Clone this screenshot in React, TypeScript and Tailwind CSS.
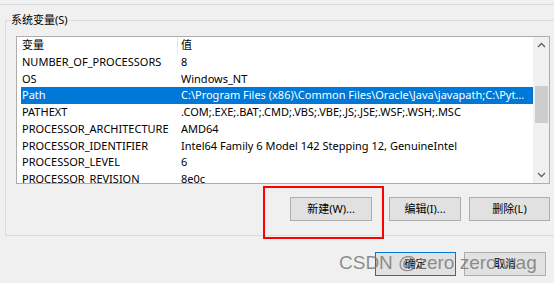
import React from "react";

const rows: [string, string][] = [
  ["NUMBER_OF_PROCESSORS", "8"],
  ["OS", "Windows_NT"],
  ["Path", "C:\\Program Files (x86)\\Common Files\\Oracle\\Java\\javapath;C:\\Python39\\Scripts\\;C:\\Python39\\"],
  ["PATHEXT", ".COM;.EXE;.BAT;.CMD;.VBS;.VBE;.JS;.JSE;.WSF;.WSH;.MSC"],
  ["PROCESSOR_ARCHITECTURE", "AMD64"],
  ["PROCESSOR_IDENTIFIER", "Intel64 Family 6 Model 142 Stepping 12, GenuineIntel"],
  ["PROCESSOR_LEVEL", "6"],
  ["PROCESSOR_REVISION", "8e0c"],
];

function Btn({ label, w, blue }: { label: string; w: string; blue?: boolean }) {
  return (
    <div
      className={`${w} h-[24px] flex items-center justify-center bg-[#e1e1e1] border ${
        blue ? "border-[#0078d7]" : "border-[#adadad]"
      } text-[11px] text-black`}
    >
      {label}
    </div>
  );
}

export default function App() {
  return (
    <div
      className="relative w-[554px] h-[283px] overflow-hidden bg-[#f0f0f0] text-black"
      style={{ fontFamily: '"Noto Sans", "Noto Sans CJK SC", sans-serif' }}
    >
      <div className="h-[5px] border-b border-[#dcdcdc]" />
      <div className="relative ml-[5px] mt-[15px] w-[600px] h-[216px] border border-[#dcdcdc]">
        <div className="absolute left-[4px] top-[-9px] px-[1px] bg-[#f0f0f0] text-[11px] leading-[16px]">
          系统变量(S)
        </div>
        <div className="ml-[10px] mt-[15px] w-[534px] h-[148px] border border-[#adadad] bg-white flex overflow-hidden">
          <div className="flex-1 pl-[4px] overflow-hidden">
            <div className="h-[17px] flex items-center text-[11px]">
              <div className="w-[156px] pl-[1px] shrink-0">变量</div>
              <div className="w-px h-full bg-[#e5e5e5]" />
              <div className="pl-[3px]">值</div>
            </div>
            {rows.map(([k, v]) => {
              const sel = k === "Path";
              return (
                <div
                  key={k}
                  className={`h-[16.7px] flex items-center text-[11px] whitespace-nowrap ${
                    sel ? "bg-[#0078d7] text-white" : ""
                  }`}
                >
                  <div className="w-[160px] pl-[1px] shrink-0">{k}</div>
                  <div className="w-[347px] overflow-hidden text-ellipsis">{v}</div>
                </div>
              );
            })}
          </div>
          <div className="w-[16px] bg-[#f0f0f0] flex flex-col items-center">
            <div className="h-[16px] w-full flex items-center justify-center">
              <svg width="9" height="6" viewBox="0 0 9 6">
                <path d="M1 5 L4.5 1.5 L8 5" fill="none" stroke="#606060" strokeWidth="1.3" />
              </svg>
            </div>
            <div className="mt-[33px] w-[13px] h-[37px] bg-[#cdcdcd]" />
            <div className="flex-1" />
            <div className="h-[16px] w-full flex items-center justify-center">
              <svg width="9" height="6" viewBox="0 0 9 6">
                <path d="M1 1 L4.5 4.5 L8 1" fill="none" stroke="#606060" strokeWidth="1.3" />
              </svg>
            </div>
          </div>
        </div>
        <div className="w-[544px] flex justify-end mt-[13px]">
          <Btn label="新建(W)..." w="w-[82px]" />
          <div className="w-[17px]" />
          <Btn label="编辑(I)..." w="w-[72px]" />
          <div className="w-[8px]" />
          <Btn label="删除(L)" w="w-[81px]" />
        </div>
      </div>
      <div className="w-[546px] flex justify-end mt-[16px]">
        <Btn label="确定" w="w-[81px]" blue />
        <div className="w-[8px]" />
        <Btn label="取消" w="w-[82px]" />
      </div>
      <div className="absolute left-[263px] top-[186px] w-[121px] h-[53px] border-2 border-[#ff0000]" />
      <div
        className="absolute left-[339px] top-[253px] text-[19px] leading-none whitespace-nowrap text-[#7a7a7a]/85"
        style={{ fontFamily: '"Liberation Sans", Arial, sans-serif' }}
      >
        CSDN @zero zero wag
      </div>
    </div>
  );
}
